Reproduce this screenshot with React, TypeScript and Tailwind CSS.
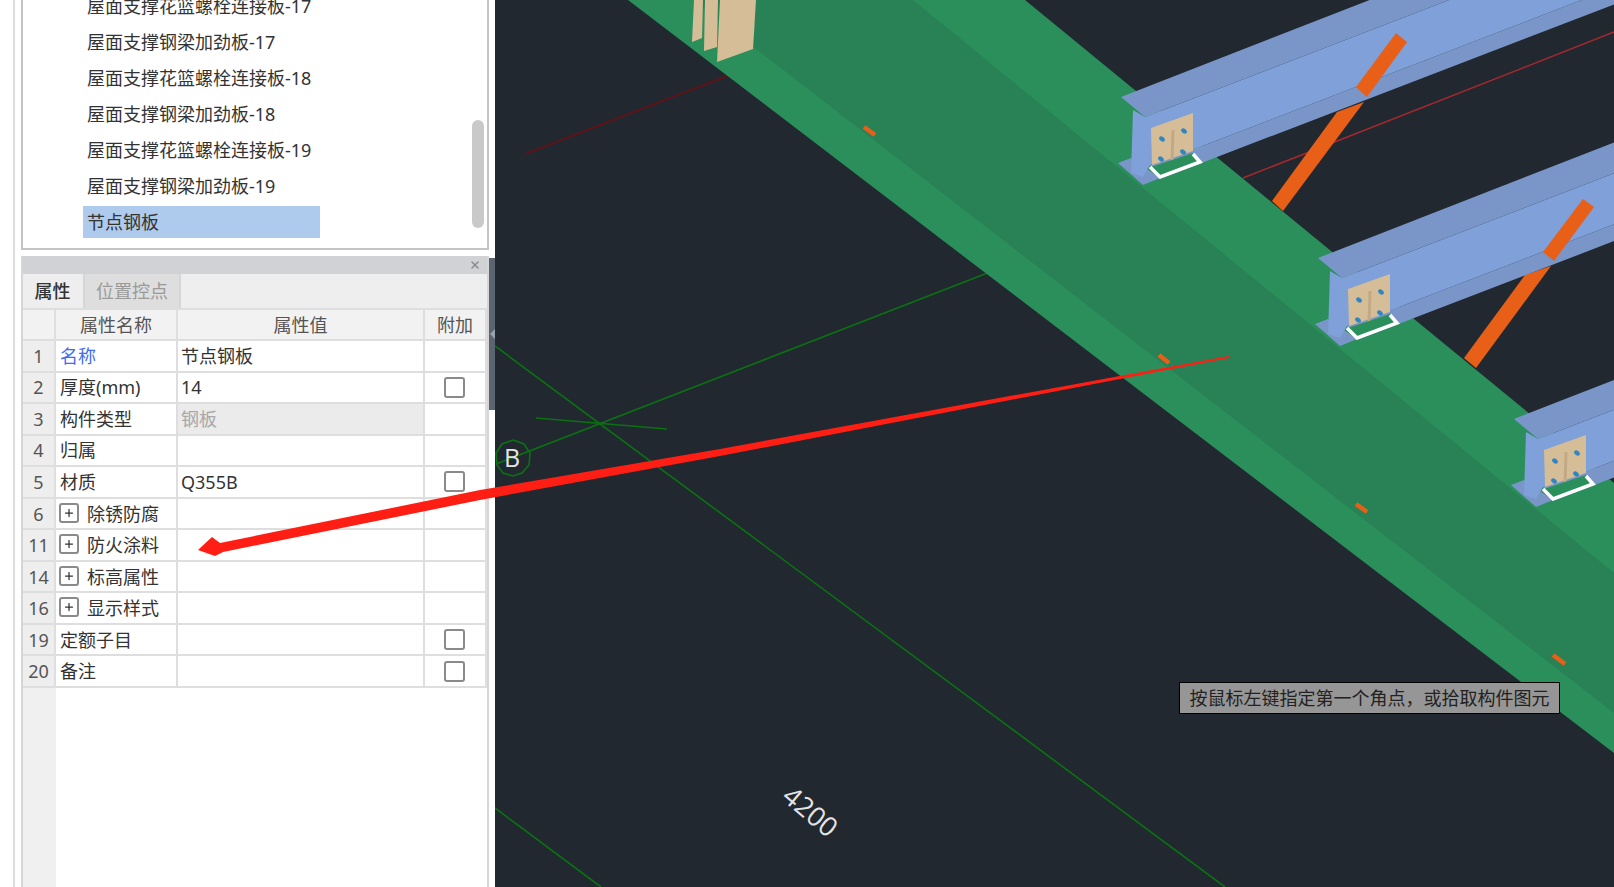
import React from 'react';
import { Plus, X } from 'lucide-react';

const listItems = [
  '屋面支撑花篮螺栓连接板-17',
  '屋面支撑钢梁加劲板-17',
  '屋面支撑花篮螺栓连接板-18',
  '屋面支撑钢梁加劲板-18',
  '屋面支撑花篮螺栓连接板-19',
  '屋面支撑钢梁加劲板-19',
];

interface PropRow {
  id: number;
  name: string;
  value?: string;
  group?: boolean;
  check?: boolean;
  blue?: boolean;
  locked?: boolean;
}

const rows: PropRow[] = [
  { id: 1, name: '名称', value: '节点钢板', blue: true },
  { id: 2, name: '厚度(mm)', value: '14', check: true },
  { id: 3, name: '构件类型', value: '钢板', locked: true },
  { id: 4, name: '归属' },
  { id: 5, name: '材质', value: 'Q355B', check: true },
  { id: 6, name: '除锈防腐', group: true },
  { id: 11, name: '防火涂料', group: true },
  { id: 14, name: '标高属性', group: true },
  { id: 16, name: '显示样式', group: true },
  { id: 19, name: '定额子目', check: true },
  { id: 20, name: '备注', check: true },
];

// one steel beam, drawn at the first beam's place and shifted for the others
const Beam = ({ dx, dy }: { dx: number; dy: number }) => (
  <g transform={`translate(${dx} ${dy})`}>
    <polygon points="1118,163 1131,158 1160,178 1143,185" fill="#7a96c8" />
    <polygon points="1197,148 2000,-161 2000,-144 1217,157 1160,179 1150,165" fill="#7a96c8" />
    <polygon points="1133,110 1145,117 2000,-212 2000,-161 1197,148 1150,165 1143,177 1131,173" fill="#7fa0d8" />
    <polygon points="1121,97 2000,-246 2000,-212 1145,117" fill="#7a96c8" />
    <polygon points="1151,128 1193,113 1193,151 1152,165" fill="#d5bd97" />
    <line x1="1173" y1="130" x2="1172" y2="163" stroke="#c2a985" strokeWidth="3" />
    <ellipse cx="1162" cy="139" rx="3.2" ry="2.2" transform="rotate(40 1162 139)" fill="#2f86c0" />
    <ellipse cx="1184" cy="131" rx="3.2" ry="2.2" transform="rotate(40 1184 131)" fill="#2f86c0" />
    <ellipse cx="1161" cy="159" rx="3.2" ry="2.2" transform="rotate(40 1161 159)" fill="#2f86c0" />
    <ellipse cx="1183" cy="152" rx="3.2" ry="2.2" transform="rotate(40 1183 152)" fill="#2f86c0" />
    <polygon points="1151,167 1193,153 1199,161 1160,176" fill="#2b8f5b" />
    <polyline points="1150,167 1160,177 1200,162 1193,154" fill="none" stroke="#ffffff" strokeWidth="3.5" />
  </g>
);

const Scene = () => (
  <svg
    className="block w-full h-full"
    viewBox="495 0 1119 887"
    preserveAspectRatio="none"
    xmlns="http://www.w3.org/2000/svg"
  >
    {/* axis lines */}
    <line x1="525" y1="154" x2="727" y2="76" stroke="#6b0f14" strokeWidth="1.6" />
    <line x1="1243" y1="178" x2="1614" y2="32" stroke="#a8282e" strokeWidth="1.4" />
    <line x1="496" y1="464" x2="990" y2="272" stroke="#0b7212" strokeWidth="1.6" />
    <line x1="536" y1="418" x2="667" y2="429" stroke="#0b7212" strokeWidth="1.6" />
    <line x1="495" y1="346" x2="1225" y2="887" stroke="#0b7212" strokeWidth="1.6" />
    <line x1="495" y1="808" x2="601" y2="887" stroke="#0b7212" strokeWidth="1.6" />

    {/* braces under the beams */}
    <polygon points="1337,112 1364,102 1283,211 1272,201" fill="#e85f17" />
    <polygon points="1525,275 1551,266 1476,368 1464,358" fill="#e85f17" />

    {/* slab */}
    <polygon points="628,0 1025,0 1614,483 1614,753" fill="#2b8f5b" />
    <polygon points="693,0 913,0 1614,573 1614,713" fill="#288255" />

    {/* plates at the top */}
    <polygon points="694,0 703,0 702,38 692,42" fill="#d5bd97" />
    <polygon points="705,0 718,0 717,47 704,51" fill="#d5bd97" />
    <polygon points="720,0 756,0 753,49 717,62" fill="#d5bd97" />

    {/* short marks on the slab */}
    <line x1="864" y1="127" x2="875" y2="135" stroke="#e85f17" strokeWidth="4.5" />
    <line x1="1159" y1="355" x2="1169" y2="363" stroke="#e85f17" strokeWidth="4.5" />
    <line x1="1356" y1="504" x2="1367" y2="512" stroke="#e85f17" strokeWidth="4.5" />
    <line x1="1553" y1="655" x2="1565" y2="664" stroke="#e85f17" strokeWidth="4.5" />

    <Beam dx={0} dy={0} />
    <Beam dx={197} dy={161} />
    <Beam dx={393} dy={322} />

    {/* braces over the beams */}
    <polygon points="1396,33 1407,42 1367,97 1356,87" fill="#e85f17" />
    <polygon points="1583,199 1594,207 1554,261 1543,252" fill="#e85f17" />

    {/* axis bubble */}
    <polygon
      points="513,440 524,444 530,453 529,465 522,473 513,476 503,473 497,465 496,453 502,444"
      fill="none"
      stroke="#0b7212"
      strokeWidth="1.6"
    />
    <text
      x="512"
      y="467"
      textAnchor="middle"
      fontSize="25"
      fill="#e4e4e4"
      fontFamily="'Open Sans', sans-serif"
    >
      B
    </text>
    <text
      x="810"
      y="821"
      textAnchor="middle"
      fontSize="27"
      fill="#e4e4e4"
      fontFamily="'Open Sans', sans-serif"
      transform="rotate(40 810 812)"
    >
      4200
    </text>
  </svg>
);

const Checkbox = () => (
  <span className="block w-[21px] h-[21px] -ml-[2px] rounded-[3px] border-2 border-[#8a8a8a] bg-white" />
);

const Row = ({ row }: { row: PropRow }) => (
  <div className="flex h-[31.55px] shrink-0 border-b-2 border-[#dedede]">
    <div className="w-[33px] shrink-0 flex items-center justify-center bg-[#eeeeee] border-r-2 border-[#dedede] text-[#555555]">
      {row.id}
    </div>
    <div className="w-[122px] shrink-0 flex items-center pl-[4px] border-r-2 border-[#dedede]">
      {row.group && (
        <span className="mr-[8px] -ml-[1px] -mt-[2px] w-[20px] h-[20px] rounded-[3px] border-2 border-[#8a8a8a] flex items-center justify-center">
          <Plus size={12} strokeWidth={2.5} color="#333333" />
        </span>
      )}
      <span className={row.blue ? 'text-[#3f6cf5]' : 'text-[#333333]'}>{row.name}</span>
    </div>
    <div
      className={`w-[247px] shrink-0 flex items-center pl-[3px] border-r-2 border-[#dedede] ${
        row.locked ? 'bg-[#ebebeb] text-[#a8a8a8]' : 'text-[#333333]'
      }`}
    >
      {row.value}
    </div>
    <div className="flex-1 flex items-center justify-center border-r-2 border-[#dedede] bg-white">
      {row.check && <Checkbox />}
    </div>
  </div>
);

const ListPanel = () => (
  <div className="relative h-[250px] shrink-0 overflow-hidden border-2 border-t-0 border-[#c4c4c4] bg-white">
    <div className="-mt-[12px] pl-[60px]">
      {listItems.map((item, i) => (
        <div key={i} className="h-[36px] flex items-center pl-[4px] text-[#333333]">
          {item}
        </div>
      ))}
      <div className="h-[36px] flex items-center">
        <div className="w-[237px] h-[32px] flex items-center pl-[4px] bg-[#aecaec] text-[#333333]">
          节点钢板
        </div>
      </div>
    </div>
    <div className="absolute left-[449px] top-[120px] w-[12px] h-[108px] rounded-[6px] bg-[#c9c9c9]" />
  </div>
);

const PropertyPanel = () => (
  <div className="flex-1 min-h-0 mt-[6px] flex flex-col border-x-2 border-[#d6d6d6] bg-white">
    <div className="h-[18px] shrink-0 flex items-center justify-end pr-[6px] bg-[#d0d2d6]">
      <X size={12} strokeWidth={3} color="#8a8a8a" />
    </div>
    <div className="h-[34px] shrink-0 flex bg-[#eeeeee]">
      <div className="w-[59px] flex items-center justify-center text-[#333333] font-medium">属性</div>
      <div className="w-[98px] ml-[1px] flex items-center justify-center bg-[#dedede] text-[#9a9a9a] border-x-2 border-[#d6d6d6]">
        位置控点
      </div>
    </div>
    <div className="flex h-[33px] shrink-0 bg-[#f2f2f2] border-y-2 border-[#dedede] text-[#555555]">
      <div className="w-[33px] shrink-0 border-r-2 border-[#dedede]" />
      <div className="w-[122px] shrink-0 flex items-center justify-center border-r-2 border-[#dedede]">属性名称</div>
      <div className="w-[247px] shrink-0 flex items-center justify-center border-r-2 border-[#dedede]">属性值</div>
      <div className="flex-1 flex items-center justify-center border-r-2 border-[#dedede]">附加</div>
    </div>
    {rows.map((row) => (
      <Row key={row.id} row={row} />
    ))}
    <div className="flex-1 min-h-0">
      <div className="w-[33px] h-full bg-[#f0f0f0]" />
    </div>
  </div>
);

export default function App() {
  return (
    <div
      className="relative flex w-[1614px] h-[887px] overflow-hidden bg-white text-[18px] leading-none"
      style={{ fontFamily: '"Noto Sans", "Noto Sans CJK SC", sans-serif' }}
    >
      <div className="w-[495px] shrink-0 flex bg-white">
        <div className="w-[13px] shrink-0" />
        <div className="w-[2px] shrink-0 bg-[#dcdcdc]" />
        <div className="w-[6px] shrink-0" />
        <div className="w-[468px] shrink-0 flex flex-col">
          <ListPanel />
          <PropertyPanel />
        </div>
        <div className="flex-1 pt-[258px]">
          <div className="h-[152px] bg-[#5b6570] flex items-center justify-center">
            <span className="w-0 h-0 border-y-[5px] border-y-transparent border-r-[5px] border-r-[#9aa2ab]" />
          </div>
        </div>
      </div>
      <div className="flex-1 min-w-0 bg-[#212830]">
        <Scene />
      </div>

      {/* red arrow laid over the screenshot */}
      <svg className="absolute inset-0 w-full h-full pointer-events-none" viewBox="0 0 1614 887">
        <polygon
          points="198,550 212,537 220,543 480,490 720,449 1229,356 1229,358 720,456 480,500 223,552 215,556"
          fill="#ff1e14"
        />
      </svg>

      <div className="absolute left-[1179px] top-[682px] w-[381px] h-[32px] flex items-center justify-center bg-[#969696] border border-black text-[#222222]">
        按鼠标左键指定第一个角点，或拾取构件图元
      </div>
    </div>
  );
}
